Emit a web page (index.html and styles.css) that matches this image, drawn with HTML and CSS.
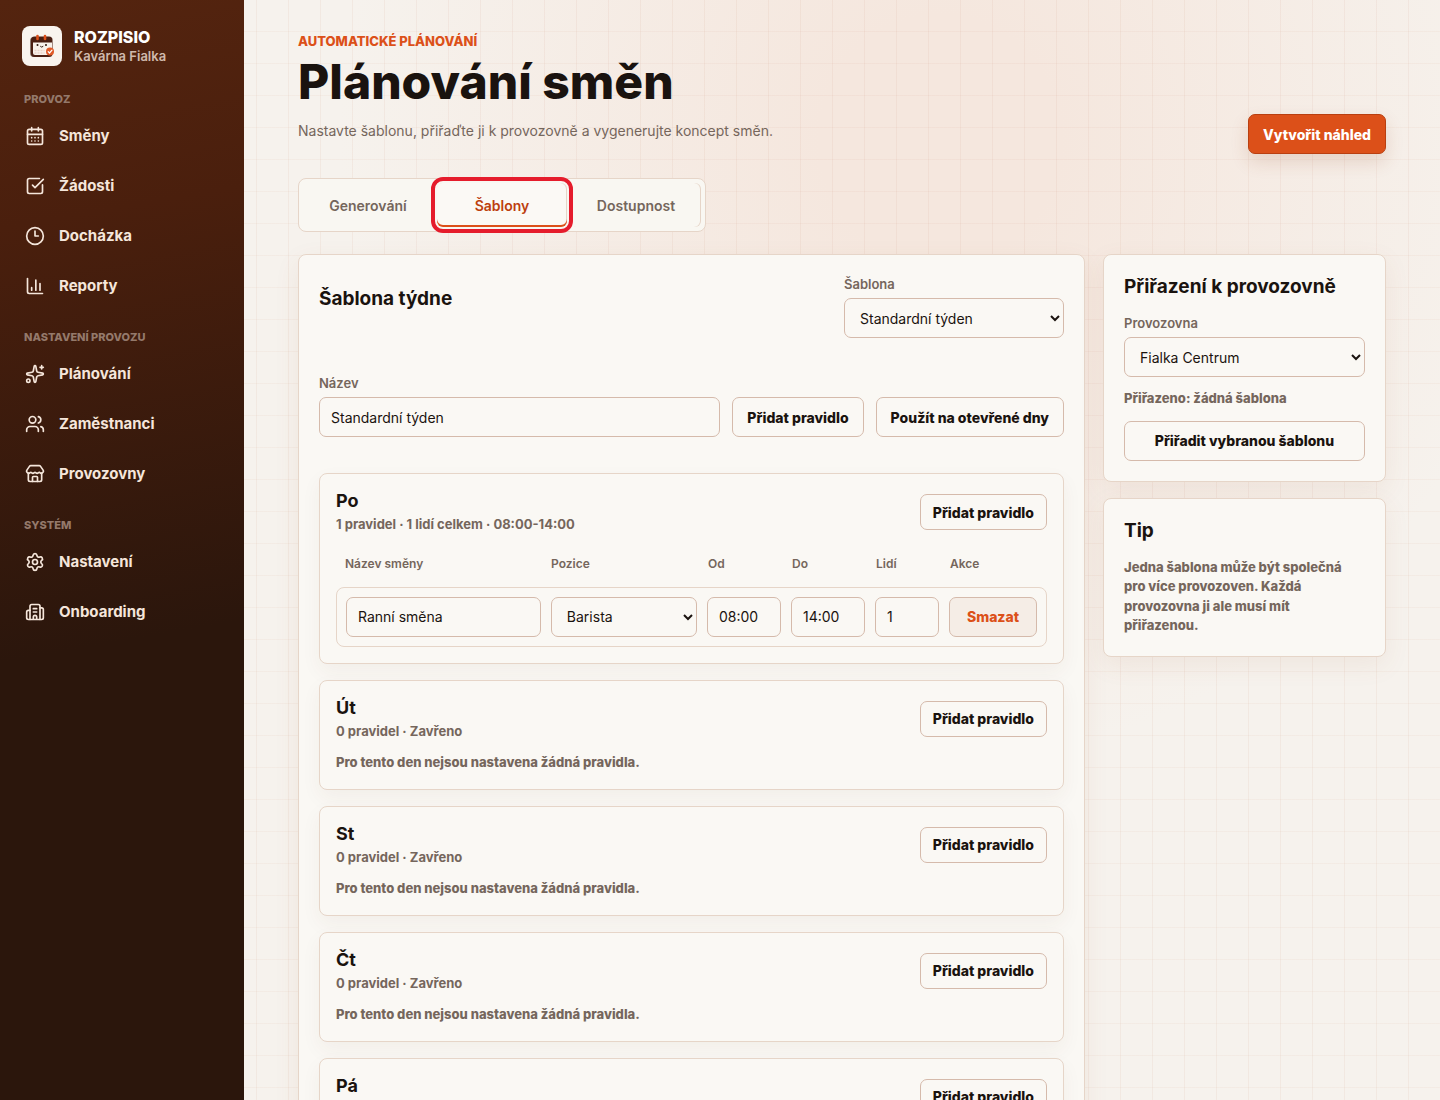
FILE: index.html
```html
<!DOCTYPE html>
<html lang="cs">
<head>
    <meta charset="UTF-8">
    <meta name="viewport" content="width=device-width, initial-scale=1.0">
    <title>Plánování směn</title>
    <link rel="stylesheet" href="styles.css">
</head>
<body>
<div class="app">
    <aside class="sidebar">
        <div class="brand">
            <span class="brand-logo">
                <svg viewBox="0 0 40 40" width="40" height="40" aria-hidden="true">
                    <rect x="8" y="11" width="20" height="20" rx="4" fill="#8b7a70"/>
                    <rect x="9" y="10.500" width="21.500" height="20.500" rx="3.500" fill="#4a1f12"/>
                    <path d="M11 16.500h19v9.500a3 3 0 0 1-3 3H13a2 2 0 0 1-2-2z" fill="#f8f1ea"/>
                    <path d="M15.500 10v3M23 10v3" stroke="#dd4f18" stroke-width="2.600" stroke-linecap="round"/>
                    <circle cx="15.500" cy="19" r="1" fill="#2b160c"/>
                    <circle cx="24" cy="19" r="1" fill="#2b160c"/>
                    <path d="M18.500 20.500q1.200 1.500 2.500 0" fill="none" stroke="#2b160c" stroke-width="1" stroke-linecap="round"/>
                    <path d="M12.500 24.500h10M12.500 27h10" stroke="#ead3c6" stroke-width="1.500" stroke-dasharray="2 1"/>
                    <circle cx="28" cy="25.500" r="4" fill="#e05a28"/>
                    <path d="M26.200 25.600l1.300 1.400 2.500-2.900" fill="none" stroke="#fff" stroke-width="1.200" stroke-linecap="round"/>
                </svg>
            </span>
            <div>
                <strong class="brand-name">ROZPISIO</strong>
                <span class="brand-place">Kavárna Fialka</span>
            </div>
        </div>

        <nav>
            <h2 class="nav-title">Provoz</h2>
            <ul class="nav-list">
                <li><a href="#smeny"><svg class="icon" viewBox="0 0 24 24"><path d="M8 2v4M16 2v4M3 10h18M8 14h.01M12 14h.01M16 14h.01M8 18h.01M12 18h.01M16 18h.01"/><rect x="3" y="4" width="18" height="18" rx="2"/></svg>Směny</a></li>
                <li><a href="#zadosti"><svg class="icon" viewBox="0 0 24 24"><path d="M21 10.656V19a2 2 0 0 1-2 2H5a2 2 0 0 1-2-2V5a2 2 0 0 1 2-2h12.344"/><path d="m9 11 3 3L22 4"/></svg>Žádosti</a></li>
                <li><a href="#dochazka"><svg class="icon" viewBox="0 0 24 24"><circle cx="12" cy="12" r="10"/><path d="M12 6v6h4"/></svg>Docházka</a></li>
                <li><a href="#reporty"><svg class="icon" viewBox="0 0 24 24"><path d="M3 3v16a2 2 0 0 0 2 2h16M18 17V9M13 17V5M8 17v-3"/></svg>Reporty</a></li>
            </ul>

            <h2 class="nav-title">Nastavení provozu</h2>
            <ul class="nav-list">
                <li><a href="#planovani"><svg class="icon" viewBox="0 0 24 24"><path d="M11.017 2.814a1 1 0 0 1 1.966 0l1.051 5.558a2 2 0 0 0 1.594 1.594l5.558 1.051a1 1 0 0 1 0 1.966l-5.558 1.051a2 2 0 0 0-1.594 1.594l-1.051 5.558a1 1 0 0 1-1.966 0l-1.051-5.558a2 2 0 0 0-1.594-1.594l-5.558-1.051a1 1 0 0 1 0-1.966l5.558-1.051a2 2 0 0 0 1.594-1.594zM20 2v4M22 4h-4"/><circle cx="4" cy="20" r="2"/></svg>Plánování</a></li>
                <li><a href="#zamestnanci"><svg class="icon" viewBox="0 0 24 24"><path d="M16 21v-2a4 4 0 0 0-4-4H6a4 4 0 0 0-4 4v2M16 3.128a4 4 0 0 1 0 7.744M22 21v-2a4 4 0 0 0-3-3.870"/><circle cx="9" cy="7" r="4"/></svg>Zaměstnanci</a></li>
                <li><a href="#provozovny"><svg class="icon" viewBox="0 0 24 24"><path d="M15 21v-5a1 1 0 0 0-1-1h-4a1 1 0 0 0-1 1v5"/><path d="M17.774 10.310a1.120 1.120 0 0 0-1.549 0 2.500 2.500 0 0 1-3.451 0 1.120 1.120 0 0 0-1.548 0 2.500 2.500 0 0 1-3.452 0 1.120 1.120 0 0 0-1.549 0 2.500 2.500 0 0 1-3.770-3.248l2.889-4.184A2 2 0 0 1 7 2h10a2 2 0 0 1 1.653.873l2.895 4.192a2.500 2.500 0 0 1-3.774 3.244"/><path d="M4 10.950V19a2 2 0 0 0 2 2h12a2 2 0 0 0 2-2v-8.050"/></svg>Provozovny</a></li>
            </ul>

            <h2 class="nav-title">Systém</h2>
            <ul class="nav-list">
                <li><a href="#nastaveni"><svg class="icon" viewBox="0 0 24 24"><path d="M9.671 4.136a2.340 2.340 0 0 1 4.659 0 2.340 2.340 0 0 0 3.319 1.915 2.340 2.340 0 0 1 2.330 4.033 2.340 2.340 0 0 0 0 3.831 2.340 2.340 0 0 1-2.330 4.033 2.340 2.340 0 0 0-3.319 1.915 2.340 2.340 0 0 1-4.659 0 2.340 2.340 0 0 0-3.320-1.915 2.340 2.340 0 0 1-2.330-4.033 2.340 2.340 0 0 0 0-3.831A2.340 2.340 0 0 1 6.350 6.051a2.340 2.340 0 0 0 3.319-1.915"/><circle cx="12" cy="12" r="3"/></svg>Nastavení</a></li>
                <li><a href="#onboarding"><svg class="icon" viewBox="0 0 24 24"><path d="M10 12h4M10 8h4M14 21v-3a2 2 0 0 0-4 0v3M6 10H4a2 2 0 0 0-2 2v7a2 2 0 0 0 2 2h16a2 2 0 0 0 2-2V9a2 2 0 0 0-2-2h-2"/><path d="M6 21V5a2 2 0 0 1 2-2h8a2 2 0 0 1 2 2v16"/></svg>Onboarding</a></li>
            </ul>
        </nav>
    </aside>

    <main class="content">
        <header class="page-header">
            <div>
                <p class="eyebrow">Automatické plánování</p>
                <h1>Plánování směn</h1>
                <p class="lead">Nastavte šablonu, přiřaďte ji k provozovně a vygenerujte koncept směn.</p>
            </div>
            <button type="button" class="btn btn-primary">Vytvořit náhled</button>
        </header>

        <div class="tabs" role="tablist">
            <button type="button" class="tab" role="tab">Generování</button>
            <button type="button" class="tab tab-active" role="tab" aria-selected="true">Šablony</button>
            <button type="button" class="tab" role="tab">Dostupnost</button>
        </div>

        <div class="layout">
            <section class="card template">
                <div class="template-header">
                    <h2 class="card-title">Šablona týdne</h2>
                    <div class="field template-select">
                        <label for="template">Šablona</label>
                        <select id="template"><option>Standardní týden</option></select>
                    </div>
                </div>

                <div class="template-form">
                    <div class="field field-grow">
                        <label for="template-name">Název</label>
                        <input type="text" id="template-name" value="Standardní týden">
                    </div>
                    <button type="button" class="btn">Přidat pravidlo</button>
                    <button type="button" class="btn">Použít na otevřené dny</button>
                </div>

                <div class="days">
                    <article class="day">
                        <div class="day-header">
                            <div>
                                <h3>Po</h3>
                                <p class="day-info">1 pravidel · 1 lidí celkem · 08:00-14:00</p>
                            </div>
                            <button type="button" class="btn btn-small">Přidat pravidlo</button>
                        </div>
                        <table class="rules">
                            <thead>
                                <tr><th>Název směny</th><th>Pozice</th><th>Od</th><th>Do</th><th>Lidí</th><th>Akce</th></tr>
                            </thead>
                            <tbody>
                                <tr>
                                    <td><input type="text" value="Ranní směna" aria-label="Název směny"></td>
                                    <td><select aria-label="Pozice"><option>Barista</option></select></td>
                                    <td><input type="text" value="08:00" aria-label="Od"></td>
                                    <td><input type="text" value="14:00" aria-label="Do"></td>
                                    <td><input type="number" value="1" min="1" aria-label="Lidí"></td>
                                    <td><button type="button" class="btn btn-danger">Smazat</button></td>
                                </tr>
                            </tbody>
                        </table>
                    </article>

                    <article class="day">
                        <div class="day-header">
                            <div>
                                <h3>Út</h3>
                                <p class="day-info">0 pravidel · Zavřeno</p>
                            </div>
                            <button type="button" class="btn btn-small">Přidat pravidlo</button>
                        </div>
                        <p class="note">Pro tento den nejsou nastavena žádná pravidla.</p>
                    </article>

                    <article class="day">
                        <div class="day-header">
                            <div>
                                <h3>St</h3>
                                <p class="day-info">0 pravidel · Zavřeno</p>
                            </div>
                            <button type="button" class="btn btn-small">Přidat pravidlo</button>
                        </div>
                        <p class="note">Pro tento den nejsou nastavena žádná pravidla.</p>
                    </article>

                    <article class="day">
                        <div class="day-header">
                            <div>
                                <h3>Čt</h3>
                                <p class="day-info">0 pravidel · Zavřeno</p>
                            </div>
                            <button type="button" class="btn btn-small">Přidat pravidlo</button>
                        </div>
                        <p class="note">Pro tento den nejsou nastavena žádná pravidla.</p>
                    </article>

                    <article class="day">
                        <div class="day-header">
                            <div>
                                <h3>Pá</h3>
                                <p class="day-info">0 pravidel · Zavřeno</p>
                            </div>
                            <button type="button" class="btn btn-small">Přidat pravidlo</button>
                        </div>
                        <p class="note">Pro tento den nejsou nastavena žádná pravidla.</p>
                    </article>
                </div>
            </section>

            <div class="side">
                <section class="card assign">
                    <h2 class="card-title">Přiřazení k provozovně</h2>
                    <div class="field">
                        <label for="place">Provozovna</label>
                        <select id="place"><option>Fialka Centrum</option></select>
                    </div>
                    <p class="note">Přiřazeno: žádná šablona</p>
                    <button type="button" class="btn">Přiřadit vybranou šablonu</button>
                </section>
                <section class="card">
                    <h2 class="card-title">Tip</h2>
                    <p class="note">Jedna šablona může být společná pro více provozoven. Každá provozovna ji ale musí mít přiřazenou.</p>
                </section>
            </div>
        </div>
    </main>
</div>
</body>
</html>
```
FILE: styles.css
```css
:root {
    --ink: #1a130f;
    --muted: #75665c;
    --accent: #dc5019;
    --paper: #faf8f4;
    --line: #e6d5c8;
    --line-strong: #d5baab;
}
* {
    box-sizing: border-box;
}
body {
    margin: 0;
    font-family: Inter, "Liberation Sans", sans-serif;
    font-size: 14px;
    line-height: 1.5;
    color: var(--ink);
    background: #f6f2ed;
}
h1, h2, h3, p, ul {
    margin: 0;
    padding: 0;
}
button, input, select {
    font: inherit;
    color: inherit;
}
.app {
    display: grid;
    grid-template-columns: 244px minmax(0, 1fr);
    min-height: 100vh;
    background:
        linear-gradient(90deg, rgba(190, 120, 90, 0.08) 1px, transparent 1px) 0 0 / 32px 32px,
        linear-gradient(rgba(190, 120, 90, 0.06) 1px, transparent 1px) 0 -1px / 32px 32px,
        radial-gradient(ellipse 600px 620px at 940px 140px, #f5e7de 20%, #f6f2ed 100%);
}

/* sidebar */
.sidebar {
    position: sticky;
    top: 0;
    height: 100vh;
    padding: 26px 16px 26px 22px;
    color: #f5e6db;
    background: linear-gradient(170deg, #54240f 0%, #4a1f0d 20%, #2b160c 58%, #2b160c 100%);
}
.brand {
    display: flex;
    align-items: center;
    gap: 12px;
    margin-bottom: 25px;
}
.brand-logo {
    display: flex;
    border-radius: 8px;
    background: #f9f4ee;
}
.brand-name, .brand-place {
    display: block;
}
.brand-name {
    font-size: 16px;
    font-weight: 800;
    line-height: 20px;
    color: #fff;
}
.brand-place {
    font-size: 13px;
    font-weight: 600;
    line-height: 18px;
    color: #cfb9ac;
}
.nav-title {
    margin-bottom: 7px;
    padding-left: 2px;
    font-size: 11px;
    font-weight: 800;
    line-height: 16px;
    text-transform: uppercase;
    color: #94796b;
}
.nav-list {
    display: grid;
    gap: 6px;
    margin-bottom: 21px;
    list-style: none;
}
.nav-list a {
    display: flex;
    align-items: center;
    gap: 14px;
    height: 44px;
    padding-left: 3px;
    font-size: 15px;
    font-weight: 700;
    color: inherit;
    text-decoration: none;
}
.icon {
    width: 20px;
    height: 20px;
    fill: none;
    stroke: currentColor;
    stroke-width: 2;
    stroke-linecap: round;
    stroke-linejoin: round;
}

/* page header */
.content {
    padding: 32px 54px 40px;
}
.page-header {
    display: flex;
    align-items: flex-end;
    justify-content: space-between;
    margin-bottom: 24px;
}
.eyebrow {
    font-size: 13px;
    font-weight: 800;
    line-height: 18px;
    text-transform: uppercase;
    color: var(--accent);
}
h1 {
    margin-top: 2px;
    font-size: 48px;
    font-weight: 800;
    line-height: 60px;
}
.lead {
    margin: 7px 0 11px;
    font-size: 14px;
    line-height: 24px;
    color: var(--muted);
}

/* controls */
.btn {
    height: 40px;
    padding: 0 14px;
    border: 1px solid var(--line-strong);
    border-radius: 7px;
    background: var(--paper);
    font-weight: 800;
    white-space: nowrap;
}
.btn-small {
    height: 36px;
    padding: 0 12px;
}
.btn-primary {
    border-color: #b93f10;
    background: var(--accent);
    color: #fff;
    box-shadow: 0 8px 18px rgba(150, 70, 30, 0.16);
}
.btn-danger {
    width: 100%;
    background: #f5ede6;
    color: var(--accent);
}
input, select {
    width: 100%;
    height: 40px;
    padding: 0 11px;
    border: 1px solid var(--line-strong);
    border-radius: 7px;
    background: var(--paper);
}
.field {
    display: grid;
    gap: 4px;
}
.field label {
    font-size: 13px;
    font-weight: 600;
    line-height: 19px;
    color: var(--muted);
}

.tabs {
    display: inline-grid;
    grid-template-columns: repeat(3, 130px);
    gap: 4px;
    margin-bottom: 22px;
    padding: 4px;
    border: 1px solid var(--line);
    border-radius: 8px;
    background: #f9f7f2;
}
.tab {
    height: 44px;
    border: 0;
    border-radius: 6px;
    background: transparent;
    font-weight: 600;
    color: var(--muted);
}
.tab:last-child {
    box-shadow: inset -1px 0 var(--line);
}
.tab-active {
    background: #fbf9f5;
    color: #bd3f0e;
    box-shadow: inset 0 -2px var(--accent), inset -1px 0 var(--line);
    outline: 4px solid #e51c2c;
    outline-offset: 2px;
}

/* cards */
.layout {
    display: grid;
    grid-template-columns: minmax(0, 1fr) 283px;
    align-items: start;
    gap: 18px;
}
.card {
    padding: 20px;
    border: 1px solid var(--line);
    border-radius: 8px;
    background: var(--paper);
    box-shadow: 0 8px 26px rgba(150, 90, 50, 0.08);
}
.card-title {
    margin-bottom: 15px;
    font-size: 19px;
    font-weight: 700;
    line-height: 24px;
}
.note {
    font-size: 13px;
    font-weight: 800;
    color: var(--muted);
}
.side {
    display: grid;
    gap: 16px;
}
.assign .note {
    margin: 12px 0;
}
.assign .btn {
    width: 100%;
}

.template-header {
    display: flex;
    justify-content: space-between;
    margin-bottom: 36px;
}
.template-header .card-title {
    margin-top: 12px;
}
.template-select {
    width: 220px;
}
.template-form {
    display: flex;
    align-items: flex-end;
    gap: 12px;
    margin-bottom: 36px;
}
.field-grow {
    flex: 1;
}

.days {
    display: grid;
    gap: 16px;
}
.day {
    padding: 16px;
    border: 1px solid var(--line);
    border-radius: 8px;
    background: var(--paper);
    box-shadow: 0 8px 20px rgba(100, 60, 30, 0.05);
}
.day-header {
    display: flex;
    align-items: center;
    justify-content: space-between;
    margin-bottom: 12px;
}
.day h3 {
    margin-bottom: 3px;
    font-size: 18px;
    font-weight: 700;
    line-height: 22px;
}
.day-info {
    font-size: 13px;
    font-weight: 700;
    color: var(--muted);
}

.rules, .rules thead, .rules tbody {
    display: block;
}
.rules tr {
    display: grid;
    grid-template-columns: minmax(0, 4fr) minmax(0, 3fr) 74px 74px 64px 88px;
    gap: 10px;
}
.rules th, .rules td {
    padding: 0;
}
.rules thead tr {
    padding: 8px 9px 14px;
}
.rules th {
    font-size: 12px;
    font-weight: 600;
    text-align: left;
    color: var(--muted);
}
.rules tbody tr {
    padding: 9px;
    border: 1px solid var(--line);
    border-radius: 8px;
}
```
